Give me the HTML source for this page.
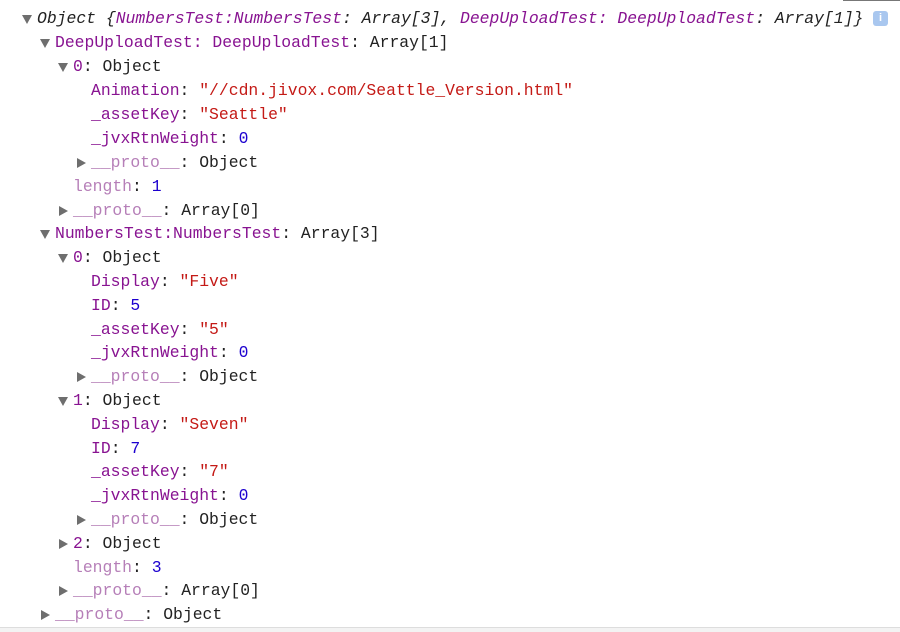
<!DOCTYPE html>
<html><head><meta charset="utf-8"><style>
html,body{margin:0;padding:0;background:#fff;width:900px;height:632px;overflow:hidden}
body{font-family:"Liberation Mono",monospace;font-size:16.4px;color:#222;position:relative}
.r{position:absolute;left:0;height:24px;line-height:24px;white-space:pre}
.t{display:inline-block;width:15px;height:24px;vertical-align:top;position:relative}
.t.o:before{content:"";position:absolute;left:0;top:8px;border-left:5px solid transparent;border-right:5px solid transparent;border-top:9px solid #6e6e6e}
.t.c:before{content:"";position:absolute;left:1px;top:7px;border-top:5px solid transparent;border-bottom:5px solid transparent;border-left:9px solid #6e6e6e}
.k{color:#881391}.d{color:#b67fb8}.s{color:#c41a16}.n{color:#1c00cf}
i{font-style:italic}
.info{position:absolute;left:873px;top:11px;width:15px;height:15px;background:#a9c7ef;border-radius:3px;color:#fff;font:bold 11px "Liberation Sans",sans-serif;text-align:center;line-height:15px}
.tl{position:absolute;left:843px;top:0;width:57px;height:1px;background:#777}
.bb{position:absolute;left:0;top:627px;width:900px;height:5px;background:#f3f3f3;border-top:1px solid #ddd}
</style></head><body>
<div class="tl"></div>
<div class="r" style="top:7px;padding-left:22px"><span class="t o"></span><i>Object {<span class="k">NumbersTest:NumbersTest</span>: Array[3], <span class="k">DeepUploadTest: DeepUploadTest</span>: Array[1]}</i></div>
<div class="info">i</div>
<div class="r" style="top:31px;padding-left:40px"><span class="t o"></span><span class="k">DeepUploadTest: DeepUploadTest</span>: Array[1]</div>
<div class="r" style="top:55px;padding-left:58px"><span class="t o"></span><span class="k">0</span>: Object</div>
<div class="r" style="top:79px;padding-left:91px"><span class="k">Animation</span>: <span class="s">"//cdn.jivox.com/Seattle_Version.html"</span></div>
<div class="r" style="top:103px;padding-left:91px"><span class="k">_assetKey</span>: <span class="s">"Seattle"</span></div>
<div class="r" style="top:127px;padding-left:91px"><span class="k">_jvxRtnWeight</span>: <span class="n">0</span></div>
<div class="r" style="top:151px;padding-left:76px"><span class="t c"></span><span class="d">__proto__</span>: Object</div>
<div class="r" style="top:175px;padding-left:73px"><span class="d">length</span>: <span class="n">1</span></div>
<div class="r" style="top:199px;padding-left:58px"><span class="t c"></span><span class="d">__proto__</span>: Array[0]</div>
<div class="r" style="top:222px;padding-left:40px"><span class="t o"></span><span class="k">NumbersTest:NumbersTest</span>: Array[3]</div>
<div class="r" style="top:246px;padding-left:58px"><span class="t o"></span><span class="k">0</span>: Object</div>
<div class="r" style="top:270px;padding-left:91px"><span class="k">Display</span>: <span class="s">"Five"</span></div>
<div class="r" style="top:294px;padding-left:91px"><span class="k">ID</span>: <span class="n">5</span></div>
<div class="r" style="top:318px;padding-left:91px"><span class="k">_assetKey</span>: <span class="s">"5"</span></div>
<div class="r" style="top:341px;padding-left:91px"><span class="k">_jvxRtnWeight</span>: <span class="n">0</span></div>
<div class="r" style="top:365px;padding-left:76px"><span class="t c"></span><span class="d">__proto__</span>: Object</div>
<div class="r" style="top:389px;padding-left:58px"><span class="t o"></span><span class="k">1</span>: Object</div>
<div class="r" style="top:413px;padding-left:91px"><span class="k">Display</span>: <span class="s">"Seven"</span></div>
<div class="r" style="top:437px;padding-left:91px"><span class="k">ID</span>: <span class="n">7</span></div>
<div class="r" style="top:460px;padding-left:91px"><span class="k">_assetKey</span>: <span class="s">"7"</span></div>
<div class="r" style="top:484px;padding-left:91px"><span class="k">_jvxRtnWeight</span>: <span class="n">0</span></div>
<div class="r" style="top:508px;padding-left:76px"><span class="t c"></span><span class="d">__proto__</span>: Object</div>
<div class="r" style="top:532px;padding-left:58px"><span class="t c"></span><span class="k">2</span>: Object</div>
<div class="r" style="top:556px;padding-left:73px"><span class="d">length</span>: <span class="n">3</span></div>
<div class="r" style="top:579px;padding-left:58px"><span class="t c"></span><span class="d">__proto__</span>: Array[0]</div>
<div class="r" style="top:603px;padding-left:40px"><span class="t c"></span><span class="d">__proto__</span>: Object</div>
<div class="bb"></div>
</body></html>
